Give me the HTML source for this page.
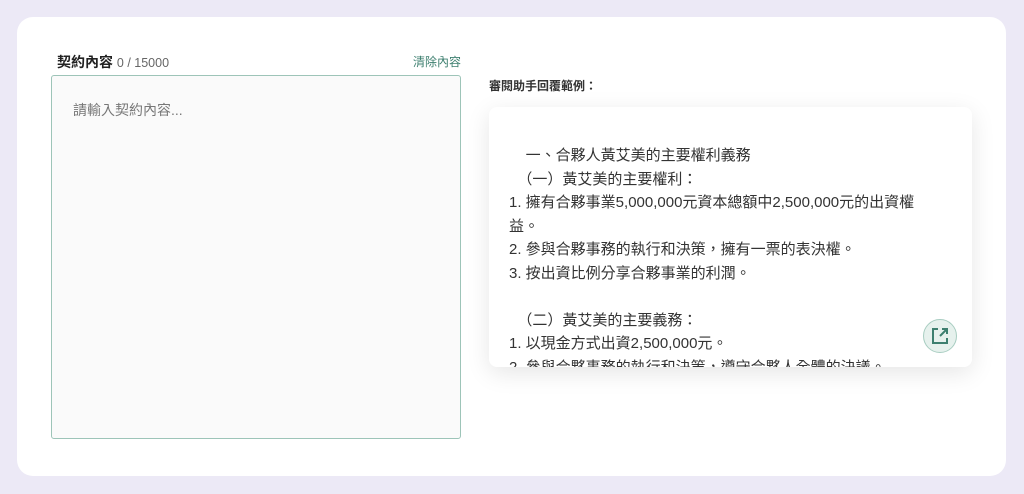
<!DOCTYPE html>
<html><head><meta charset="utf-8"><style>
html,body{margin:0;padding:0;}
body{width:1024px;height:494px;background:#ece9f6;font-family:"Liberation Sans","Noto Sans CJK TC",sans-serif;position:relative;overflow:hidden;}
.card{position:absolute;left:17px;top:17px;width:989px;height:459px;background:#fff;border-radius:16px;}
.lbl{position:absolute;left:57px;top:52px;font-size:14px;font-weight:bold;color:#222;}
.lbl span{font-weight:normal;color:#666;font-size:12.5px;}
.clr{position:absolute;left:413px;top:53px;font-size:12px;color:#3d7f6f;}
.ta{position:absolute;left:51px;top:75px;width:408px;height:362px;background:#fafafa;border:1px solid #9dc4b8;border-radius:3px;}
.ph{position:absolute;left:73px;top:100px;font-size:14px;color:#777;}
.rt{position:absolute;left:489px;top:77px;font-size:12px;font-weight:bold;color:#333;}
.box{position:absolute;left:489px;top:107px;width:483px;height:260px;background:#fff;border-radius:8px;box-shadow:0 6px 24px rgba(0,0,0,0.10);overflow:hidden;}
.txt{position:absolute;left:20px;top:37px;font-size:15px;line-height:23.5px;color:#333;white-space:pre;}
.btn{position:absolute;left:923px;top:319px;width:34px;height:34px;border-radius:50%;background:#e6f1ed;border:1px solid #a8cdc1;box-sizing:border-box;}
</style></head><body>
<div class="card"></div>
<div class="lbl">契約內容 <span>0 / 15000</span></div>
<div class="clr">清除內容</div>
<div class="ta"></div>
<div class="ph">請輸入契約內容...</div>
<div class="rt">審閱助手回覆範例：</div>
<div class="box"><div class="txt">    一、合夥人黃艾美的主要權利義務
  （一）黃艾美的主要權利：
1. 擁有合夥事業5,000,000元資本總額中2,500,000元的出資權
益。
2. 參與合夥事務的執行和決策，擁有一票的表決權。
3. 按出資比例分享合夥事業的利潤。

  （二）黃艾美的主要義務：
1. 以現金方式出資2,500,000元。
2. 參與合夥事務的執行和決策，遵守合夥人全體的決議。</div></div>
<div class="btn"><svg width="34" height="34" viewBox="0 0 34 34" style="position:absolute;left:-1px;top:-1px"><path d="M15 10H10v14h14v-5" fill="none" stroke="#3d7f6f" stroke-width="2"/><path d="M17 17l7-7M19 10h5v5" fill="none" stroke="#3d7f6f" stroke-width="2"/></svg></div>
</body></html>
